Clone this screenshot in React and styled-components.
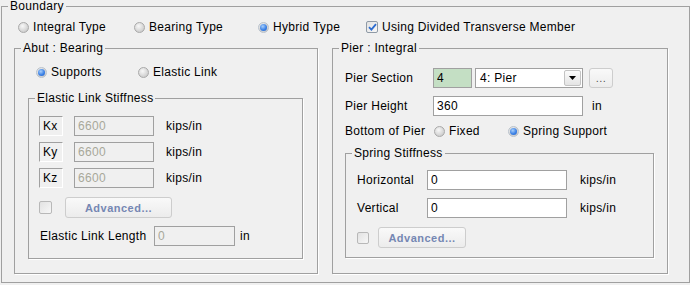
import styled, { createGlobalStyle } from "styled-components";

const GlobalStyle = createGlobalStyle`
  html, body {
    margin: 0;
    padding: 0;
    background: #f0f0f0;
  }
  body {
    font-family: "Liberation Sans", Arial, sans-serif;
    font-size: 12px;
    letter-spacing: 0.3px;
    color: #000;
  }
`;

const Group = styled.fieldset`
  margin: 0;
  padding: 0;
  min-width: 0;
  box-sizing: border-box;
  border: 1px solid #a0a0a0;
  box-shadow: 1px 1px 0 #fff;
  display: flex;
  flex-direction: column;
  width: ${(p) => p.$width}px;
`;

const Legend = styled.legend`
  margin-left: 6px;
  padding: 0 2px;
  font-size: 12px;
  line-height: 12px;
`;

const Boundary = styled(Group)`
  margin-left: 1px;
  height: 283px;
`;

const BoundaryBody = styled.div`
  flex: 1;
  display: flex;
  flex-direction: column;
  padding: 8px 19px 8px 12px;
`;

const TypeRow = styled.div`
  display: flex;
  align-items: center;
  height: 14px;
  padding-left: ${(p) => p.$indent || 0}px;
`;

const Panels = styled.div`
  flex: 1;
  display: flex;
  gap: 14px;
  margin-top: 8px;
`;

const AbutBody = styled.div`
  display: flex;
  flex-direction: column;
  padding: 11px 0 0 13px;
`;

const StiffBody = styled.div`
  display: flex;
  flex-direction: column;
  padding: 12px 0 12px 10px;
`;

const PierBody = styled.div`
  display: flex;
  flex-direction: column;
  padding: 14px 0 0 12px;
`;

const SpringBody = styled.div`
  display: flex;
  flex-direction: column;
  padding: 11px 0 9px 11px;
`;

const Row = styled.div`
  display: flex;
  align-items: center;
  height: ${(p) => p.$h || 20}px;
  margin-top: ${(p) => p.$top || 0}px;
`;

const Option = styled.label`
  display: flex;
  align-items: center;
  gap: 4px;
  width: ${(p) => (p.$width ? `${p.$width}px` : "auto")};
  white-space: nowrap;
`;

const Radio = styled.span`
  position: relative;
  width: 11px;
  height: 11px;
  box-sizing: border-box;
  border-radius: 50%;
  border: 1px solid ${(p) => (p.$on ? "#b9c2cc" : "#a9a9a9")};
  background: radial-gradient(circle at 40% 35%, #f8f8f8 0, #d6d6d6 60%, #c0c0c0 100%);
  flex: none;
  &::after {
    content: "";
    display: ${(p) => (p.$on ? "block" : "none")};
    position: absolute;
    left: 1px;
    top: 1px;
    width: 7px;
    height: 7px;
    border-radius: 50%;
    background: radial-gradient(circle at 40% 35%, #a9d0fb 0, #3d82e6 55%, #1c5fc9 100%);
  }
`;

const CheckBox = styled.span`
  display: inline-flex;
  align-items: center;
  justify-content: center;
  width: ${(p) => p.$size || 12}px;
  height: ${(p) => p.$size || 12}px;
  box-sizing: border-box;
  border: 1px solid ${(p) => (p.$on ? "#8f9aa6" : "#b8b8b8")};
  border-radius: 2px;
  background: linear-gradient(135deg, #e2e2e2 0%, #f7f7f7 100%);
  flex: none;
`;

const FieldLabel = styled.span`
  width: ${(p) => p.$width}px;
  flex: none;
  white-space: nowrap;
  padding-left: ${(p) => p.$pad || 0}px;
  box-sizing: border-box;
`;

const AxisBox = styled.span`
  width: 24px;
  height: 20px;
  box-sizing: border-box;
  padding-left: 3px;
  line-height: 18px;
  border-top: 1px solid #a0a0a0;
  border-left: 1px solid #a0a0a0;
  border-right: 1px solid #fff;
  border-bottom: 1px solid #fff;
  flex: none;
`;

const TextBox = styled.input`
  width: ${(p) => p.$width}px;
  height: 20px;
  box-sizing: border-box;
  margin: 0 0 0 ${(p) => p.$left || 0}px;
  padding: 0 3px;
  border: 1px solid #a0a0a0;
  border-radius: 0;
  outline: none;
  font-family: "Liberation Sans", Arial, sans-serif;
  font-size: 12px;
  letter-spacing: 0.3px;
  line-height: 18px;
  color: ${(p) => (p.disabled ? "#a8a89a" : "#000")};
  background: ${(p) => (p.$green ? "#c4dfc4" : p.disabled ? "#f0f0f0" : "#fff")};
  flex: none;
`;

const Unit = styled.span`
  margin-left: ${(p) => p.$left}px;
  white-space: nowrap;
`;

const Combo = styled.div`
  display: flex;
  align-items: center;
  justify-content: space-between;
  width: 108px;
  height: 20px;
  box-sizing: border-box;
  margin-left: 3px;
  padding: 1px 1px 1px 4px;
  border: 1px solid #a0a0a0;
  background: #fff;
  flex: none;
`;

const ComboArrow = styled.span`
  display: flex;
  align-items: center;
  justify-content: center;
  width: 17px;
  height: 16px;
  box-sizing: border-box;
  border: 1px solid #c3c3c3;
  border-radius: 2px;
  background: linear-gradient(#fbfbfb, #e4e4e4);
`;

const PushButton = styled.button`
  width: ${(p) => p.$width}px;
  height: ${(p) => p.$h || 21}px;
  margin: 0 0 0 ${(p) => p.$left || 0}px;
  padding: 0;
  box-sizing: border-box;
  border: 1px solid #cdcdcd;
  border-radius: 3px;
  background: linear-gradient(#f9f9f9, #ececec);
  font-family: "Liberation Sans", Arial, sans-serif;
  font-size: 11px;
  font-weight: ${(p) => (p.$bold ? 700 : 400)};
  letter-spacing: 0.5px;
  color: ${(p) => (p.$bold ? "#7587b3" : "#555")};
  flex: none;
`;

function RadioOption({ on, width, children }) {
  return (
    <Option $width={width}>
      <Radio $on={on} />
      {children}
    </Option>
  );
}

function CheckMark() {
  return (
    <svg width="9" height="8" viewBox="0 0 9 8">
      <path d="M1 4.2 L3.4 6.6 L8 1.2" fill="none" stroke="#2c6cd0" strokeWidth="1.8" />
    </svg>
  );
}

function StiffRow({ axis, top }) {
  return (
    <Row $top={top}>
      <AxisBox>{axis}</AxisBox>
      <TextBox $width={80} $left={11} value="6600" disabled readOnly />
      <Unit $left={12}>kips/in</Unit>
    </Row>
  );
}

export default function App() {
  return (
    <>
      <GlobalStyle />
      <Boundary>
        <Legend>Boundary</Legend>
        <BoundaryBody>
          <TypeRow $indent={4}>
            <RadioOption width={116}>Integral Type</RadioOption>
            <RadioOption width={124}>Bearing Type</RadioOption>
            <RadioOption width={108} on>
              Hybrid Type
            </RadioOption>
            <Option>
              <CheckBox $size={12} $on>
                <CheckMark />
              </CheckBox>
              Using Divided Transverse Member
            </Option>
          </TypeRow>

          <Panels>
            <Group $width={304}>
              <Legend>Abut : Bearing</Legend>
              <AbutBody>
                <TypeRow $indent={8}>
                  <RadioOption width={102} on>
                    Supports
                  </RadioOption>
                  <RadioOption>Elastic Link</RadioOption>
                </TypeRow>
                <Group $width={275} style={{ marginTop: 13 }}>
                  <Legend>Elastic Link Stiffness</Legend>
                  <StiffBody>
                    <StiffRow axis="Kx" />
                    <StiffRow axis="Ky" top={6} />
                    <StiffRow axis="Kz" top={6} />
                    <Row $h={21} $top={9}>
                      <CheckBox $size={13} />
                      <PushButton $width={107} $left={13} $bold>
                        Advanced...
                      </PushButton>
                    </Row>
                    <Row $h={21} $top={7}>
                      <FieldLabel $width={115} $pad={1}>
                        Elastic Link Length
                      </FieldLabel>
                      <TextBox $width={81} value="0" disabled readOnly />
                      <Unit $left={5}>in</Unit>
                    </Row>
                  </StiffBody>
                </Group>
              </AbutBody>
            </Group>

            <Group $width={336}>
              <Legend>Pier : Integral</Legend>
              <PierBody>
                <Row>
                  <FieldLabel $width={88}>Pier Section</FieldLabel>
                  <TextBox $width={39} $green value="4" readOnly />
                  <Combo>
                    <span>4: Pier</span>
                    <ComboArrow>
                      <svg width="7" height="4" viewBox="0 0 7 4">
                        <path d="M0 0 H7 L3.5 4 Z" fill="#000" />
                      </svg>
                    </ComboArrow>
                  </Combo>
                  <PushButton $width={24} $h={20} $left={6}>
                    ...
                  </PushButton>
                </Row>
                <Row $top={8}>
                  <FieldLabel $width={88}>Pier Height</FieldLabel>
                  <TextBox $width={150} value="360" readOnly />
                  <Unit $left={9}>in</Unit>
                </Row>
                <TypeRow style={{ marginTop: 8 }}>
                  <FieldLabel $width={89}>Bottom of Pier</FieldLabel>
                  <RadioOption width={74}>Fixed</RadioOption>
                  <RadioOption on>Spring Support</RadioOption>
                </TypeRow>
                <Group $width={309} style={{ marginTop: 9 }}>
                  <Legend>Spring Stiffness</Legend>
                  <SpringBody>
                    <Row>
                      <FieldLabel $width={70}>Horizontal</FieldLabel>
                      <TextBox $width={140} value="0" readOnly />
                      <Unit $left={13}>kips/in</Unit>
                    </Row>
                    <Row $top={8}>
                      <FieldLabel $width={70}>Vertical</FieldLabel>
                      <TextBox $width={140} value="0" readOnly />
                      <Unit $left={13}>kips/in</Unit>
                    </Row>
                    <Row $h={21} $top={9}>
                      <CheckBox $size={12} />
                      <PushButton $width={88} $left={9} $bold>
                        Advanced...
                      </PushButton>
                    </Row>
                  </SpringBody>
                </Group>
              </PierBody>
            </Group>
          </Panels>
        </BoundaryBody>
      </Boundary>
    </>
  );
}
